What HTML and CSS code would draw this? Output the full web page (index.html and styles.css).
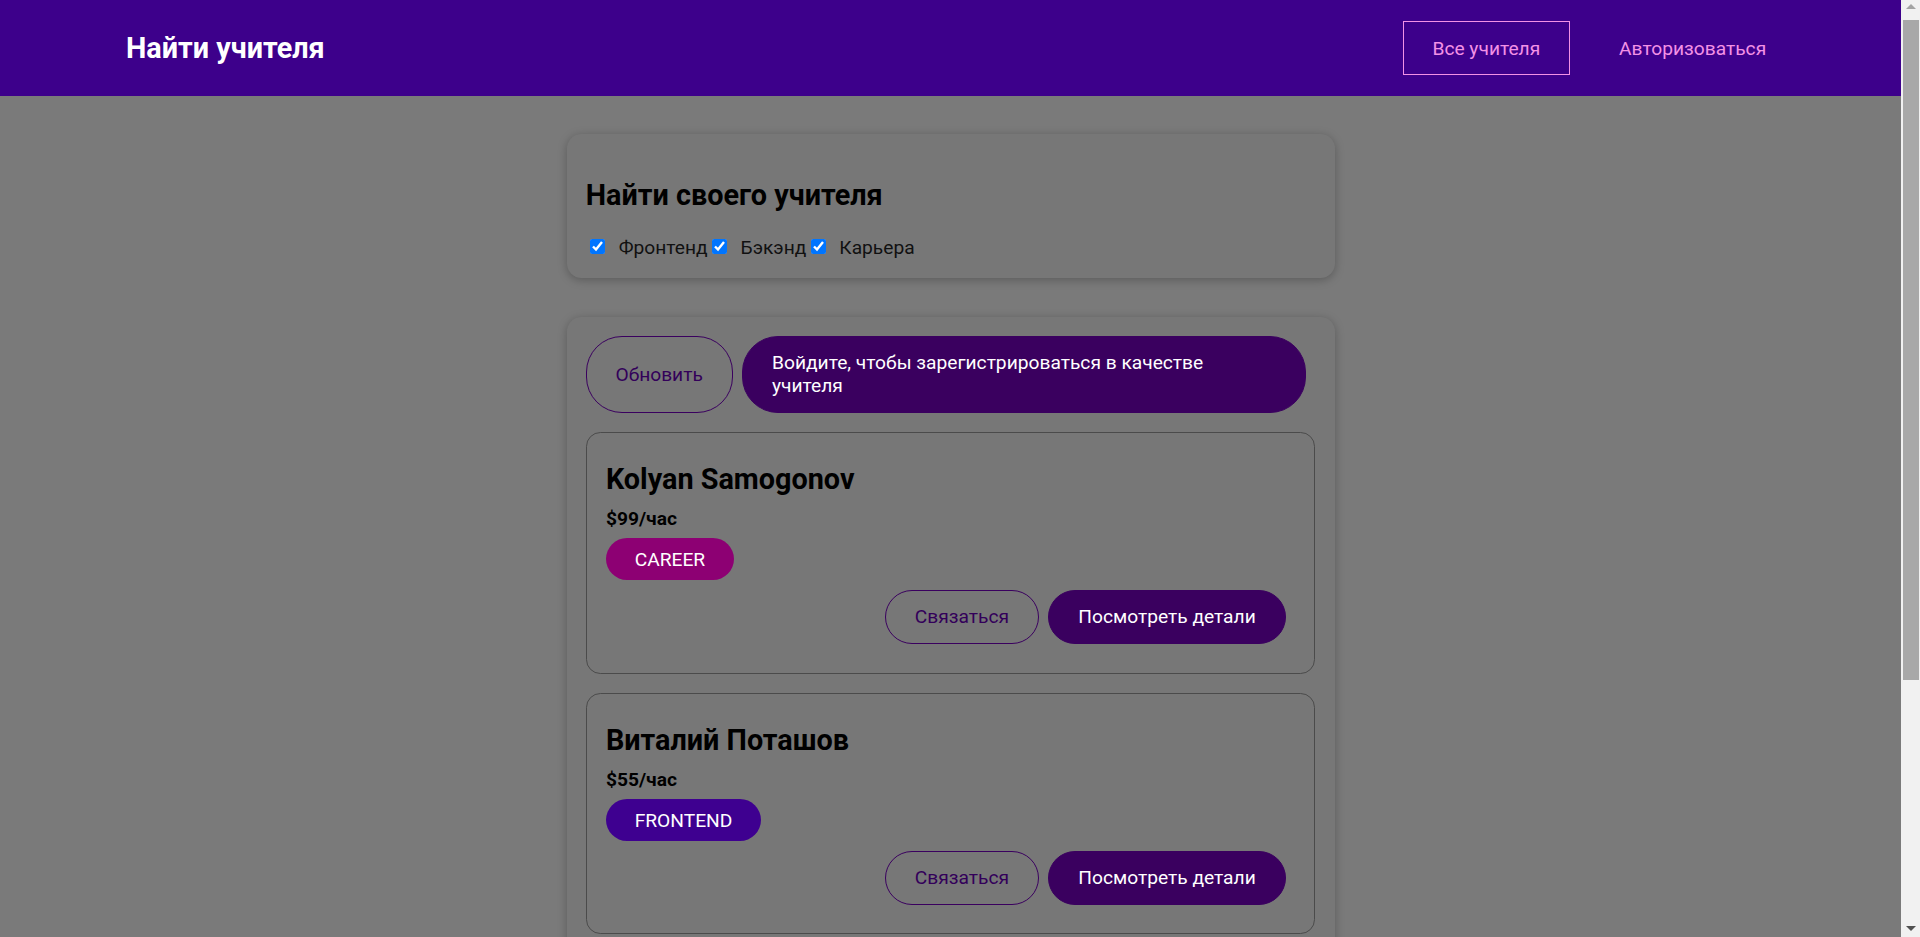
FILE: index.html
```html
<!DOCTYPE html>
<html lang="ru">
<head>
<meta charset="utf-8">
<title>Найти учителя</title>
<link rel="stylesheet" href="styles.css">
</head>
<body>
<div class="page">
  <header class="topbar">
    <h1 class="brand"><a href="#">Найти учителя</a></h1>
    <nav>
      <ul class="nav-list">
        <li><a class="nav-link active" href="#">Все учителя</a></li>
        <li><a class="nav-link" href="#">Авторизоваться</a></li>
      </ul>
    </nav>
  </header>
  <main class="content">
    <section class="panel">
      <h2 class="panel-title">Найти своего учителя</h2>
      <div class="filters"><input type="checkbox" id="frontend" checked><label for="frontend">Фронтенд</label><input type="checkbox" id="backend" checked><label for="backend">Бэкэнд</label><input type="checkbox" id="career" checked><label for="career">Карьера</label></div>
    </section>
    <section class="panel">
      <div class="controls">
        <button class="btn btn-outline">Обновить</button>
        <button class="btn btn-solid">Войдите, чтобы зарегистрироваться в качестве учителя</button>
      </div>
      <ul class="teacher-list">
        <li class="teacher-card">
          <h3 class="teacher-name">Kolyan Samogonov</h3>
          <h4 class="teacher-rate">$99/час</h4>
          <div class="tags"><span class="tag tag-career">CAREER</span></div>
          <div class="actions">
            <button class="btn btn-outline">Связаться</button>
            <button class="btn btn-solid">Посмотреть детали</button>
          </div>
        </li>
        <li class="teacher-card">
          <h3 class="teacher-name">Виталий Поташов</h3>
          <h4 class="teacher-rate">$55/час</h4>
          <div class="tags"><span class="tag tag-frontend">FRONTEND</span></div>
          <div class="actions">
            <button class="btn btn-outline">Связаться</button>
            <button class="btn btn-solid">Посмотреть детали</button>
          </div>
        </li>
      </ul>
    </section>
  </main>
</div>
<div class="scrollbar" aria-hidden="true">
  <div class="scroll-arrow scroll-up"></div>
  <div class="scroll-track"><div class="scroll-thumb"></div></div>
  <div class="scroll-arrow scroll-down"></div>
</div>
</body>
</html>
```

FILE: styles.css
```css
* {
  box-sizing: border-box;
}

body {
  margin: 0;
  height: 100vh;
  overflow: hidden;
  display: flex;
  font-family: Roboto, "Liberation Sans", sans-serif;
  font-size: 19.2px;
  background: #7a7a7a;
  color: #000;
}

.page {
  flex: 1;
  min-width: 0;
  height: 100%;
  overflow: hidden;
}

/* window scrollbar */
.scrollbar {
  width: 19px;
  flex: none;
  background: #f1f1f1;
  display: flex;
  flex-direction: column;
  border-left: 2px solid #f1f1f1;
  border-right: 1px solid #f1f1f1;
}

.scroll-arrow {
  height: 20px;
  flex: none;
  display: flex;
  justify-content: center;
}

.scroll-up::before {
  content: "";
  margin-top: 4px;
  border-left: 5px solid transparent;
  border-right: 5px solid transparent;
  border-bottom: 5px solid #a3a3a3;
  height: 0;
}

.scroll-down {
  align-items: flex-end;
}

.scroll-down::before {
  content: "";
  margin-bottom: 6px;
  border-left: 5px solid transparent;
  border-right: 5px solid transparent;
  border-top: 5px solid #505050;
  height: 0;
}

.scroll-track {
  flex: 1;
}

.scroll-thumb {
  height: 660px;
  background: #a8a8a8;
}

/* header */
.topbar {
  height: 96px;
  background: #3d008b;
  display: flex;
  align-items: center;
  justify-content: space-between;
  padding: 0 105px 0 126px;
}

.brand {
  margin: 0;
  font-size: 28.8px;
  font-weight: 700;
}

.brand a {
  color: #fff;
  text-decoration: none;
}

.nav-list {
  list-style: none;
  margin: 0;
  padding: 0;
  display: flex;
  align-items: center;
  gap: 19.2px;
}

.nav-link {
  display: block;
  padding: 14.4px 28.8px;
  border: 1px solid transparent;
  color: #f391e6;
  text-decoration: none;
}

.nav-link.active {
  border-color: #f391e6;
}

/* content */
.content {
  display: flex;
  flex-direction: column;
  align-items: center;
  gap: 38.4px;
  padding: 38.4px 0;
}

.panel {
  width: 768px;
  background: #777777;
  border-radius: 14.4px;
  box-shadow: 0 2px 9.6px rgba(0, 0, 0, 0.26);
  padding: 19.2px;
}

.panel-title {
  font-size: 28.8px;
  margin: 24px 0 24px;
}

.filters input {
  width: 15px;
  height: 15px;
  margin: 3.6px 3.6px 3.6px 4.8px;
}

.filters label {
  margin-left: 9.6px;
  color: #111;
}

.controls {
  display: flex;
}

.btn {
  font: inherit;
  font-size: 19.2px;
  line-height: normal;
  text-align: left;
  padding: 14.4px 28.8px;
  border-radius: 36px;
  border: 1px solid #3a005f;
  margin: 0 9.6px 0 0;
  cursor: pointer;
}

.btn-outline {
  background: transparent;
  color: #33005a;
}

.btn-solid {
  background: #3a005f;
  color: #fff;
}

.teacher-list {
  list-style: none;
  margin: 0;
  padding: 0;
}

.teacher-card {
  margin-top: 19.2px;
  border: 1px solid #4b4b4b;
  border-radius: 14.4px;
  padding: 19.2px;
}

.teacher-name {
  font-size: 28.8px;
  font-weight: 700;
  margin: 9.6px 0 0;
}

.teacher-rate {
  font-size: 19.2px;
  font-weight: 700;
  margin: 11.5px 0 0;
}

.tags {
  margin-top: 8px;
}

.tag {
  display: inline-block;
  padding: 9.6px 28.8px;
  border-radius: 24px;
  color: #fff;
}

.tag-career {
  background: #8d0073;
}

.tag-frontend {
  background: #3e0090;
}

.actions {
  display: flex;
  justify-content: flex-end;
  margin: 9.6px 0;
}
```
